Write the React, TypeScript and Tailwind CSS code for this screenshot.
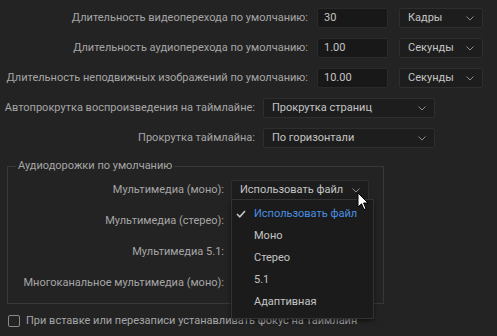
import React from "react";

const Chevron = () => (
  <svg width="8" height="5" viewBox="0 0 8 5" className="shrink-0">
    <path d="M0.5 0.5 L4 4 L7.5 0.5" fill="none" stroke="#8c8c8c" strokeWidth="1" />
  </svg>
);

const Input = ({ value }: { value: string }) => (
  <div className="ml-[9px] w-[71px] h-[20px] bg-[#181818] border border-[#2a2a2a] rounded-[2px] flex items-center pl-[6px] text-[#c4c4c4]">
    {value}
  </div>
);

const Select = ({ value, w, ml }: { value: string; w: string; ml: string }) => (
  <div
    className={`${w} ${ml} h-[20px] bg-[#1d1d1d] border border-[#2e2e2e] rounded-[2px] flex items-center justify-between pl-[8px] pr-[8px] text-[#c4c4c4] whitespace-nowrap`}
  >
    <span>{value}</span>
    <Chevron />
  </div>
);

export default function App() {
  return (
    <div className="w-[497px] h-[336px] bg-[#232323] relative overflow-hidden font-['Roboto',sans-serif] text-[11px] leading-[16px] text-[#a6a6a6] whitespace-nowrap">
      <div className="flex flex-col gap-[10px] pt-[8px]">
        <div className="flex items-center h-[20px]">
          <div className="w-[308px] text-right">Длительность видеоперехода по умолчанию:</div>
          <Input value="30" />
          <Select value="Кадры" w="w-[84px]" ml="ml-[11px]" />
        </div>
        <div className="flex items-center h-[20px]">
          <div className="w-[308px] text-right">Длительность аудиоперехода по умолчанию:</div>
          <Input value="1.00" />
          <Select value="Секунды" w="w-[84px]" ml="ml-[11px]" />
        </div>
        <div className="flex items-center h-[20px]">
          <div className="w-[308px] text-right">Длительность неподвижных изображений по умолчанию:</div>
          <Input value="10.00" />
          <Select value="Секунды" w="w-[84px]" ml="ml-[11px]" />
        </div>
        <div className="flex items-center h-[20px]">
          <div className="w-[255px] text-right">Автопрокрутка воспроизведения на таймлайне:</div>
          <Select value="Прокрутка страниц" w="w-[172px]" ml="ml-[8px]" />
        </div>
        <div className="flex items-center h-[20px]">
          <div className="w-[255px] text-right">Прокрутка таймлайна:</div>
          <Select value="По горизонтали" w="w-[172px]" ml="ml-[8px]" />
        </div>
      </div>

      <fieldset className="mt-[10px] ml-[7px] w-[377px] border border-[#383838] pt-[7px] pb-[11px] flex flex-col gap-[13px]">
        <legend className="ml-[8px] px-[2px]">Аудиодорожки по умолчанию</legend>
        <div className="flex items-center h-[18px]">
          <div className="w-[216px] text-right">Мультимедиа (моно):</div>
          <Select value="Использовать файл" w="w-[138px]" ml="ml-[7px]" />
        </div>
        <div className="flex items-center h-[18px]">
          <div className="w-[216px] text-right">Мультимедиа (стерео):</div>
        </div>
        <div className="flex items-center h-[18px]">
          <div className="w-[216px] text-right">Мультимедиа 5.1:</div>
        </div>
        <div className="flex items-center h-[18px]">
          <div className="w-[216px] text-right">Многоканальное мультимедиа (моно):</div>
        </div>
      </fieldset>

      <div className="flex items-center mt-[10px] ml-[8px] h-[14px]">
        <div className="w-[12px] h-[12px] border border-[#8a8a8a] rounded-[2px]" />
        <span className="ml-[6px]">При вставке или перезаписи устанавливать фокус на таймлайн</span>
      </div>

      <div className="absolute left-[231px] top-[199px] w-[143px] h-[120px] bg-[#1b1b1b] border border-[#333333] shadow-[0_2px_4px_rgba(0,0,0,0.5)] flex flex-col pt-[3px]">
        <div className="flex items-center h-[22px] text-[#4a8fe0]">
          <svg width="10" height="8" viewBox="0 0 10 8" className="ml-[4px]">
            <path d="M1 4 L3.8 6.8 L9 1" fill="none" stroke="#c8c8c8" strokeWidth="1.5" />
          </svg>
          <span className="ml-[8px]">Использовать файл</span>
        </div>
        <div className="flex items-center h-[22px] pl-[22px] text-[#c4c4c4]">Моно</div>
        <div className="flex items-center h-[22px] pl-[22px] text-[#c4c4c4]">Стерео</div>
        <div className="flex items-center h-[22px] pl-[22px] text-[#c4c4c4]">5.1</div>
        <div className="flex items-center h-[22px] pl-[22px] text-[#c4c4c4]">Адаптивная</div>
      </div>

      <svg className="absolute left-[357px] top-[192px]" width="13" height="20" viewBox="0 0 13 20">
        <path d="M1 1 L1 15 L4.5 11.8 L7 17.5 L9 16.6 L6.6 11 L11 11 Z" fill="#ffffff" stroke="#000000" strokeWidth="1" strokeLinejoin="round" />
      </svg>
    </div>
  );
}
